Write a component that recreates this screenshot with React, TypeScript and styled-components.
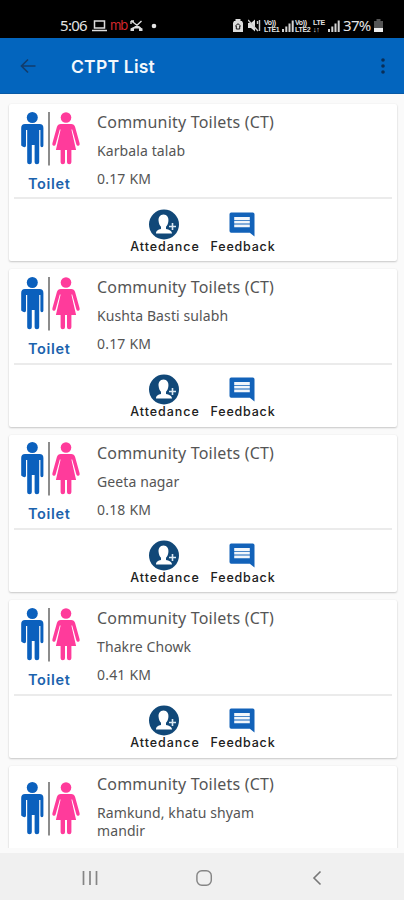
import React from "react";
import styled, { createGlobalStyle } from "styled-components";

const Global = createGlobalStyle`
  * { box-sizing: border-box; }
  body { margin: 0; background: #fafafa; }
  svg { flex: none; display: block; }
`;

const Screen = styled.div`
  width: 404px;
  height: 900px;
  display: flex;
  flex-direction: column;
  overflow: hidden;
  background: #fafafa;
  font-family: "Noto Sans", sans-serif;
`;

const StatusBar = styled.div`
  height: 38px;
  flex: none;
  display: flex;
  justify-content: space-between;
  align-items: flex-start;
  padding: 16px 21px 0 60px;
  background: #000;
  color: #e4e4e4;
`;

const StatusGroup = styled.div<{ $gap: number }>`
  display: flex;
  align-items: center;
  height: 19px;
  gap: ${(p) => p.$gap}px;
`;

const StatusText = styled.span<{ $width: number }>`
  width: ${(p) => p.$width}px;
  flex: none;
  font-size: 15px;
  line-height: 19px;
  letter-spacing: -0.7px;
`;

const RedMark = styled.span`
  font: 13px/19px Inter, sans-serif;
  letter-spacing: -1.1px;
  width: 17px;
  color: #d3272d;
`;

const Network = styled.span<{ $width: number }>`
  display: flex;
  flex: none;
  flex-direction: column;
  width: ${(p) => p.$width}px;
  font: 700 7px/7px "Liberation Sans", sans-serif;
  letter-spacing: -0.3px;
  white-space: nowrap;
`;

const AppBar = styled.header`
  height: 56px;
  flex: none;
  display: flex;
  align-items: center;
  padding: 0 17px 0 20px;
  background: #0365be;
  border-bottom: 1px solid #0759a5;
`;

const AppTitle = styled.h1`
  flex: 1;
  margin: 2px 0 0 35px;
  color: #f4f8fc;
  font: 600 17.5px/24px Inter, sans-serif;
  letter-spacing: 0.22px;
`;

const List = styled.main`
  height: 754px;
  flex: none;
  display: flex;
  flex-direction: column;
  gap: 8px;
  padding: 10px 7px 0 9px;
  overflow: hidden;
`;

const Card = styled.article`
  min-height: 157.4px;
  flex: none;
  display: flex;
  flex-direction: column;
  padding: 0 5px;
  border-radius: 2px;
  background: #fff;
  box-shadow: 0 1px 2px rgba(0, 0, 0, 0.2), 0 0 2px rgba(0, 0, 0, 0.05);
`;

const Summary = styled.div<{ $tall: boolean }>`
  height: ${(p) => (p.$tall ? 112 : 95.4)}px;
  flex: none;
  display: flex;
  border-bottom: 2px solid #ebebeb;
`;

const Emblem = styled.div`
  width: 83px;
  flex: none;
  display: flex;
  flex-direction: column;
  justify-content: center;
  padding: 3px 0 0 6px;
`;

const EmblemLabel = styled.span`
  margin: 7px 0 0 8px;
  color: #1c63ad;
  font: 600 14.5px/20px Inter, sans-serif;
  letter-spacing: 0.65px;
`;

const Details = styled.div`
  width: 190px;
  display: flex;
  flex-direction: column;
  color: #555;
`;

const Kind = styled.h2`
  margin: 7px 0 0;
  font-size: 16px;
  font-weight: 400;
  line-height: 22px;
  letter-spacing: 0.2px;
  white-space: nowrap;
`;

const Place = styled.p`
  margin: 9px 0 0;
  font-size: 14px;
  line-height: 18px;
  letter-spacing: 0.1px;
`;

const Distance = styled.p`
  margin: 10px 0 0;
  font-size: 14px;
  line-height: 18px;
  letter-spacing: 0.2px;
`;

const Actions = styled.div`
  display: flex;
  padding: 9.6px 0 0 111px;
`;

const Action = styled.button`
  width: 78px;
  padding: 0;
  border: 0;
  background: none;
  display: flex;
  flex-direction: column;
  align-items: center;
  color: #202020;
`;

const ActionLabel = styled.span<{ $spacing: number }>`
  margin: -1px 0 0 2px;
  font: 500 12.5px/15px Inter, sans-serif;
  letter-spacing: ${(p) => p.$spacing}px;
`;

const NavBar = styled.nav`
  flex: 1;
  display: flex;
  align-items: center;
  justify-content: space-between;
  margin-top: 5px;
  padding: 3px 82px 0 82px;
  background: #f0f0f0;
`;

const ToiletIcon = () => (
  <svg width="62" height="56" viewBox="0 0 62 56">
    <g fill="#0b60bd">
      <circle cx="12.3" cy="6.5" r="5.5" />
      <path d="M5 13h14.600q3.800 0 3.800 4v17.500q0 1.800-1.500 1.800t-1.500-1.800V19h-1.200v32.200q0 2-2.300 2t-2.300-2V34h-2.800v17.200q0 2-2.300 2t-2.300-2V19H6v15.500q0 1.800-1.500 1.800T1.200 34.500V17q0-4 3.800-4z" />
    </g>
    <path d="M29 1v53.500" stroke="#666" strokeWidth="1.500" />
    <g fill="#ff3b9b">
      <circle cx="46" cy="6.500" r="5.300" />
      <path d="M40.800 13h10.400q3 0 3.900 3l4.500 16.200q.5 2-1.100 2.500t-2.200-1.500L52.200 18.500h-.8L56.100 39h-4.700v12.200q0 2-2.200 2t-2.200-2V39h-2v12.200q0 2-2.200 2t-2.200-2V39h-4.700l4.700-20.500h-.8L35.700 33.200q-.6 2-2.200 1.500t-1.100-2.500L36.900 16q.9-3 3.900-3z" />
    </g>
  </svg>
);

const AttendanceIcon = () => (
  <svg width="30" height="31" viewBox="0 0 30 31">
    <circle cx="15" cy="15.500" r="15" fill="#114878" />
    <path d="M14.500 5.500c-3.600 0-5.300 3-4.900 6.500.2 2.600 1.200 4.800 2.400 5.800v2.200c-3 .7-5 1.500-5 4.500h16c0-3-3-3.800-6-4.500v-2.200c1.200-1 2.200-3.200 2.400-5.800.4-3.500-1.300-6.500-4.900-6.500z" fill="#fff" />
    <path d="M23.500 14v7M20 17.500h7" stroke="#dce9f3" strokeWidth="1.600" />
  </svg>
);

const FeedbackIcon = () => (
  <svg width="26" height="31" viewBox="0 0 26 31">
    <path d="M2.200 3.500h21.600q1.700 0 1.700 1.700V27.500l-4.700-3.700H2.200q-1.700 0-1.700-1.700V5.200q0-1.700 1.700-1.700z" fill="#1262b9" />
    <path d="M5.200 8h15.600v2.900H5.200zm0 3.700h15.600v2.800H5.200zm0 3.700h15.600v2.800H5.200z" fill="#f2f6fb" />
  </svg>
);

const Signal = ({ width = 12 }: { width?: number }) => (
  <svg width={width} height="13" viewBox={`0 0 ${width} 13`}>
    <path d="M0 10h2v3H0zm3.300-2.500h2V13h-2zm3.200-3h2V13h-2zm3.200-3h2V13h-2z" fill="#d4d4d4" />
  </svg>
);

type Entry = { name: string; distance?: string };

const places: Entry[] = [
  { name: "Karbala talab", distance: "0.17 KM" },
  { name: "Kushta Basti sulabh", distance: "0.17 KM" },
  { name: "Geeta nagar", distance: "0.18 KM" },
  { name: "Thakre Chowk", distance: "0.41 KM" },
  { name: "Ramkund, khatu shyam mandir" },
];

export default function App() {
  return (
    <Screen>
      <Global />
      <StatusBar>
        <StatusGroup $gap={3}>
          <StatusText $width={29}>5:06</StatusText>
          <svg width="15" height="12" viewBox="0 0 15 12">
            <path d="M2.500 1h10v7h-10zM0 10.500h15" fill="none" stroke="#ddd" strokeWidth="1.500" />
          </svg>
          <RedMark>mb</RedMark>
          <svg width="13" height="12" viewBox="0 0 13 12">
            <path d="M1.500 1l9 7M11.500 1L4 8M1 1v3M1 1h3" fill="none" stroke="#ddd" strokeWidth="1.400" />
            <path d="M.500 11V8.500Q6.500 4.500 12.500 8.500V11H9V8.500H4V11z" fill="#ddd" />
          </svg>
          <svg width="16" height="8" viewBox="0 0 16 8"><circle cx="8" cy="4" r="2.300" fill="#e4e4e4" /></svg>
        </StatusGroup>
        <StatusGroup $gap={1}>
          <svg width="14" height="14" viewBox="0 0 14 14">
            <path d="M2.500 0h5v2h1.500l1 2v9H0V4l1-2h1.500z" fill="#ddd" />
            <path d="M2.200 7.200L5 4.700l2.800 2.500M3.300 7v3h3.400V7" fill="none" stroke="#111" />
          </svg>
          <svg width="15" height="13" viewBox="0 0 15 13">
            <path d="M0 4h3l4-3.500v12L3 9H0z" fill="#ddd" />
            <path d="M0 1l10 11M9.500 2v3M11.500 1v11" stroke="#ccc" strokeWidth="1.400" />
          </svg>
          <Network $width={17}><span>Vo))</span><span>LTE1</span></Network>
          <Signal />
          <Network $width={17}><span>Vo))</span><span>LTE2</span></Network>
          <Network $width={14}><span>LTE</span><span>↓↑</span></Network>
          <Signal width={14} />
          <StatusText $width={30}>37%</StatusText>
          <svg width="9" height="14" viewBox="0 0 9 14">
            <path d="M2.500 0h4v2H9v7H0V2h2.500z" fill="#555" /><path d="M0 9h9v4H0z" fill="#eee" />
          </svg>
        </StatusGroup>
      </StatusBar>
      <AppBar>
        <svg width="16" height="16" viewBox="0 0 16 16">
          <path d="M15.500 8H2M8 1.500L1.500 8 8 14.500" fill="none" stroke="#123d6d" strokeWidth="1.700" />
        </svg>
        <AppTitle>CTPT List</AppTitle>
        <svg width="8" height="18" viewBox="0 0 8 18" fill="#092f58">
          <circle cx="4" cy="3" r="1.800" /><circle cx="4" cy="9" r="1.800" /><circle cx="4" cy="15" r="1.800" />
        </svg>
      </AppBar>
      <List>
        {places.map(({ name, distance }) => (
          <Card key={name}>
            <Summary $tall={!distance}>
              <Emblem>
                <ToiletIcon />
                <EmblemLabel>Toilet</EmblemLabel>
              </Emblem>
              <Details>
                <Kind>Community Toilets (CT)</Kind>
                <Place>{name}</Place>
                {distance && <Distance>{distance}</Distance>}
              </Details>
            </Summary>
            {distance && (
              <Actions>
                <Action><AttendanceIcon /><ActionLabel $spacing={0.95}>Attedance</ActionLabel></Action>
                <Action><FeedbackIcon /><ActionLabel $spacing={0.8}>Feedback</ActionLabel></Action>
              </Actions>
            )}
          </Card>
        ))}
      </List>
      <NavBar>
        <svg width="16" height="16" viewBox="0 0 16 16">
          <path d="M1.500 1v14M8 1v14M14.500 1v14" stroke="#858585" strokeWidth="1.700" />
        </svg>
        <svg width="18" height="18" viewBox="0 0 20 18">
          <rect x="1" y="1" width="16" height="16" rx="5.500" fill="none" stroke="#858585" strokeWidth="1.600" />
        </svg>
        <svg width="10" height="16" viewBox="0 0 10 16">
          <path d="M8.500 1.500L2 8l6.500 6.500" fill="none" stroke="#777" strokeWidth="1.600" />
        </svg>
      </NavBar>
    </Screen>
  );
}
